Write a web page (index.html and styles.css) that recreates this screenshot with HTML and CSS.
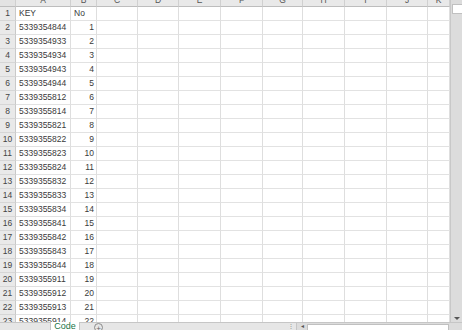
FILE: index.html
```html
<!DOCTYPE html>
<html lang="ja">
<head>
    <meta charset="UTF-8">
    <title>Code</title>
    <link rel="stylesheet" href="styles.css">
</head>
<body>
    <div class="sheet">
        <div class="grid">
            <table>
                <colgroup>
                    <col class="c-rh"><col class="c-a"><col class="c-b">
                    <col class="c-41"><col class="c-41"><col class="c-42"><col class="c-42"><col class="c-40">
                    <col class="c-42"><col class="c-42"><col class="c-41"><col class="c-k">
                </colgroup>
                <tr class="colhead">
                    <th class="corner"><div></div></th>
                    <th><div>A</div></th><th><div>B</div></th><th><div>C</div></th><th><div>D</div></th>
                    <th><div>E</div></th><th><div>F</div></th><th><div>G</div></th><th><div>H</div></th>
                    <th><div>I</div></th><th><div>J</div></th><th><div>K</div></th>
                </tr>
                <tr><th>1</th><td>KEY</td><td>No</td><td></td><td></td><td></td><td></td><td></td><td></td><td></td><td></td><td></td></tr>
                <tr><th>2</th><td>5339354844</td><td class="num">1</td><td></td><td></td><td></td><td></td><td></td><td></td><td></td><td></td><td></td></tr>
                <tr><th>3</th><td>5339354933</td><td class="num">2</td><td></td><td></td><td></td><td></td><td></td><td></td><td></td><td></td><td></td></tr>
                <tr><th>4</th><td>5339354934</td><td class="num">3</td><td></td><td></td><td></td><td></td><td></td><td></td><td></td><td></td><td></td></tr>
                <tr><th>5</th><td>5339354943</td><td class="num">4</td><td></td><td></td><td></td><td></td><td></td><td></td><td></td><td></td><td></td></tr>
                <tr><th>6</th><td>5339354944</td><td class="num">5</td><td></td><td></td><td></td><td></td><td></td><td></td><td></td><td></td><td></td></tr>
                <tr><th>7</th><td>5339355812</td><td class="num">6</td><td></td><td></td><td></td><td></td><td></td><td></td><td></td><td></td><td></td></tr>
                <tr><th>8</th><td>5339355814</td><td class="num">7</td><td></td><td></td><td></td><td></td><td></td><td></td><td></td><td></td><td></td></tr>
                <tr><th>9</th><td>5339355821</td><td class="num">8</td><td></td><td></td><td></td><td></td><td></td><td></td><td></td><td></td><td></td></tr>
                <tr><th>10</th><td>5339355822</td><td class="num">9</td><td></td><td></td><td></td><td></td><td></td><td></td><td></td><td></td><td></td></tr>
                <tr><th>11</th><td>5339355823</td><td class="num">10</td><td></td><td></td><td></td><td></td><td></td><td></td><td></td><td></td><td></td></tr>
                <tr><th>12</th><td>5339355824</td><td class="num">11</td><td></td><td></td><td></td><td></td><td></td><td></td><td></td><td></td><td></td></tr>
                <tr><th>13</th><td>5339355832</td><td class="num">12</td><td></td><td></td><td></td><td></td><td></td><td></td><td></td><td></td><td></td></tr>
                <tr><th>14</th><td>5339355833</td><td class="num">13</td><td></td><td></td><td></td><td></td><td></td><td></td><td></td><td></td><td></td></tr>
                <tr><th>15</th><td>5339355834</td><td class="num">14</td><td></td><td></td><td></td><td></td><td></td><td></td><td></td><td></td><td></td></tr>
                <tr><th>16</th><td>5339355841</td><td class="num">15</td><td></td><td></td><td></td><td></td><td></td><td></td><td></td><td></td><td></td></tr>
                <tr><th>17</th><td>5339355842</td><td class="num">16</td><td></td><td></td><td></td><td></td><td></td><td></td><td></td><td></td><td></td></tr>
                <tr><th>18</th><td>5339355843</td><td class="num">17</td><td></td><td></td><td></td><td></td><td></td><td></td><td></td><td></td><td></td></tr>
                <tr><th>19</th><td>5339355844</td><td class="num">18</td><td></td><td></td><td></td><td></td><td></td><td></td><td></td><td></td><td></td></tr>
                <tr><th>20</th><td>5339355911</td><td class="num">19</td><td></td><td></td><td></td><td></td><td></td><td></td><td></td><td></td><td></td></tr>
                <tr><th>21</th><td>5339355912</td><td class="num">20</td><td></td><td></td><td></td><td></td><td></td><td></td><td></td><td></td><td></td></tr>
                <tr><th>22</th><td>5339355913</td><td class="num">21</td><td></td><td></td><td></td><td></td><td></td><td></td><td></td><td></td><td></td></tr>
                <tr><th>23</th><td>5339355914</td><td class="num">22</td><td></td><td></td><td></td><td></td><td></td><td></td><td></td><td></td><td></td></tr>
            </table>
        </div>
        <div class="vscroll">
            <div class="vthumb"></div>
            <div class="vspace"></div>
            <div class="varrow"></div>
        </div>
    </div>
    <div class="tabbar">
        <div class="tabnav"></div>
        <div class="tab">Code</div>
        <div class="addsheet">+</div>
        <div class="tabfill"></div>
        <div class="hdots">⋮</div>
        <div class="hscroll">
            <div class="harrow">◂</div>
            <div class="hthumb"></div>
        </div>
    </div>
</body>
</html>
```

FILE: styles.css
```css
html, body {
    margin: 0;
    padding: 0;
    width: 462px;
    height: 330px;
    overflow: hidden;
    background-color: #ffffff;
    font-family: "Liberation Sans", "Noto Sans CJK JP", sans-serif;
    font-size: 8.5px;
    color: #3a3a3a;
}

.sheet {
    display: flex;
    height: 322px;
}

.grid {
    width: 450px;
    height: 322px;
    overflow: hidden;
}

table {
    table-layout: fixed;
    width: 450px;
    border-collapse: separate;
    border-spacing: 0;
}

.c-rh { width: 16px; }
.c-a { width: 55px; }
.c-b { width: 26px; }
.c-40 { width: 40px; }
.c-41 { width: 41px; }
.c-42 { width: 42px; }
.c-k { width: 22px; }

th, td {
    height: 13px;
    padding: 0;
    line-height: 13px;
    border-right: 1px solid #dedede;
    border-bottom: 1px solid #e2e2e2;
    white-space: nowrap;
    overflow: hidden;
    font-weight: normal;
}

td {
    padding-left: 3px;
    text-align: left;
}

td.num {
    padding-left: 0;
    padding-right: 2px;
    text-align: right;
}

th {
    background-color: #e9e9e9;
    color: #444444;
    text-align: center;
    border-right: 1px solid #c9c9c9;
    border-bottom: 1px solid #d6d6d6;
}

tr.colhead th {
    height: 6px;
    line-height: 6px;
    border-right: 1px solid #d0d0d0;
    border-bottom: 1px solid #bdbdbd;
}

tr.colhead th div {
    height: 6px;
    line-height: 9px;
    overflow: hidden;
    color: #555555;
}

tr.colhead th div::before {
    content: "";
    display: block;
    margin-top: -4px;
}

tr.colhead th.corner {
    background-color: #e3e3e3;
}

.vscroll {
    width: 11px;
    display: flex;
    flex-direction: column;
    background-color: #dcdcdc;
    border-left: 1px solid #c8c8c8;
}

.vthumb {
    margin: 4px 0 0 1px;
    height: 8px;
    width: 9px;
    background-color: #ffffff;
    border: 1px solid #c0c0c0;
}

.vspace {
    flex: 1;
}

.varrow {
    height: 7px;
    display: flex;
    justify-content: center;
    align-items: center;
}

.varrow::before {
    content: "";
    width: 0;
    height: 0;
    border-left: 3px solid transparent;
    border-right: 3px solid transparent;
    border-top: 3px solid #555555;
}

.tabbar {
    display: flex;
    height: 8px;
    background-color: #e6e6e6;
    border-top: 1px solid #c6c6c6;
    box-sizing: border-box;
    font-size: 9px;
}

.tabnav {
    width: 50px;
}

.tab {
    width: 28px;
    background-color: #ffffff;
    color: #217346;
    text-align: center;
    line-height: 9px;
    margin-top: -1px;
    border-left: 1px solid #c6c6c6;
    border-right: 1px solid #c6c6c6;
    overflow: hidden;
}

.addsheet {
    margin-left: 14px;
    width: 9px;
    height: 9px;
    border: 1px solid #8a8a8a;
    border-radius: 50%;
    color: #666666;
    font-size: 8px;
    line-height: 9px;
    text-align: center;
    box-sizing: border-box;
}

.tabfill {
    flex: 1;
}

.hdots {
    width: 10px;
    color: #888888;
    font-size: 6px;
    line-height: 7px;
    text-align: center;
}

.hscroll {
    width: 165px;
    display: flex;
    background-color: #dcdcdc;
    border-left: 1px solid #c6c6c6;
}

.harrow {
    width: 10px;
    color: #555555;
    font-size: 6px;
    line-height: 7px;
    text-align: center;
}

.hthumb {
    width: 140px;
    background-color: #ffffff;
    border: 1px solid #c0c0c0;
    border-bottom: none;
    margin-top: 1px;
}
```
